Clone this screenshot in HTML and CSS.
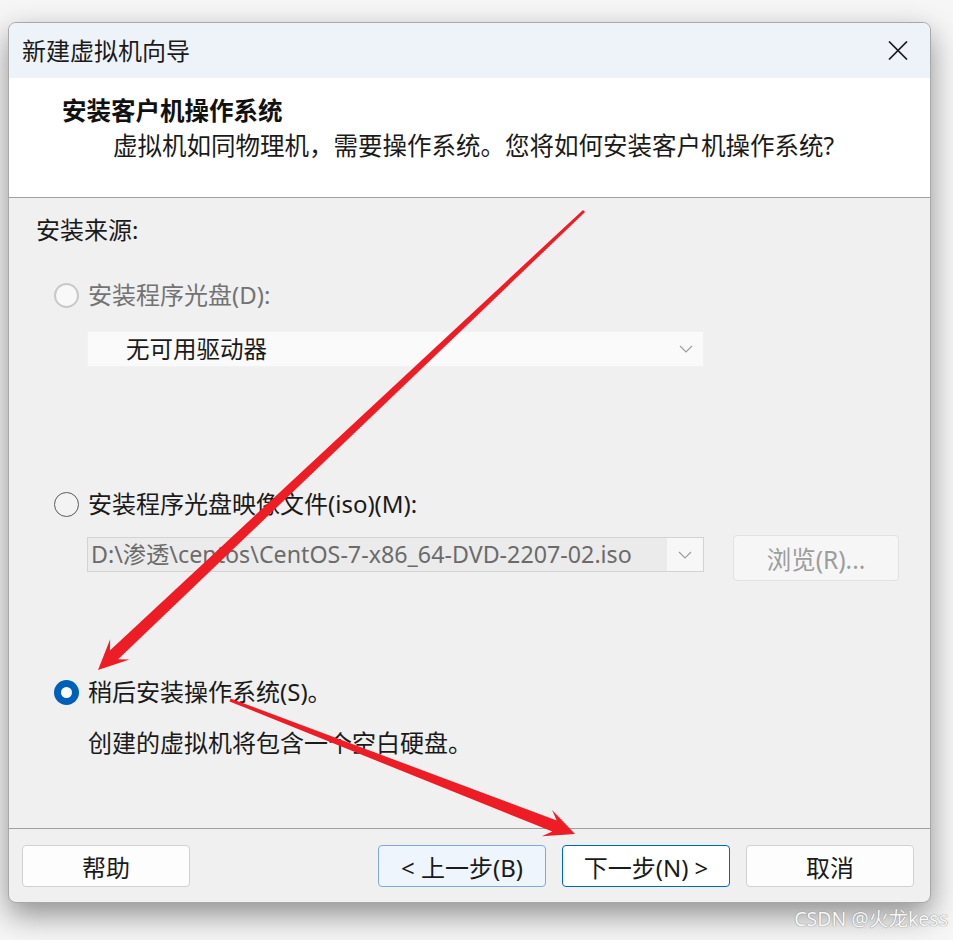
FILE: index.html
```html
<!DOCTYPE html>
<html lang="zh-CN">
<head>
<meta charset="utf-8">
<title>新建虚拟机向导</title>
<link rel="stylesheet" href="styles.css">
</head>
<body>
<div class="window">
  <div class="titlebar">
    <span class="title">新建虚拟机向导</span>
    <svg class="close" width="20" height="19" viewBox="0 0 20 19"><path d="M1 0.5 L19 18.5 M19 0.5 L1 18.5" stroke="#1b1b1b" stroke-width="1.7" fill="none"/></svg>
  </div>
  <div class="header">
    <div class="h-title">安装客户机操作系统</div>
    <div class="h-sub">虚拟机如同物理机，需要操作系统。您将如何安装客户机操作系统?</div>
  </div>
  <div class="content">
    <div class="section-label">安装来源:</div>
    <div class="radio-row disabled r1"><span class="radio"></span><span class="label">安装程序光盘(D):</span></div>
    <div class="select">
      <span class="select-text">无可用驱动器</span>
      <svg class="chev" width="14" height="8" viewBox="0 0 14 8"><path d="M1 1 L7 7 L13 1" stroke="#9c9c9c" stroke-width="1.1" fill="none"/></svg>
    </div>
    <div class="radio-row r2"><span class="radio"></span><span class="label">安装程序光盘映像文件(iso)(M):</span></div>
    <div class="iso-row">
      <div class="combo">
        <span class="combo-text">D:\渗透\centos\CentOS-7-x86_64-DVD-2207-02.iso</span>
        <span class="combo-btn"><svg class="chev" width="14" height="8" viewBox="0 0 14 8"><path d="M1 1 L7 7 L13 1" stroke="#9c9c9c" stroke-width="1.1" fill="none"/></svg></span>
      </div>
      <div class="browse">浏览(R)...</div>
    </div>
    <div class="radio-row r3"><span class="radio checked"></span><span class="label">稍后安装操作系统(S)。</span></div>
    <div class="desc">创建的虚拟机将包含一个空白硬盘。</div>
  </div>
  <div class="footer">
    <button class="btn">帮助</button>
    <div class="spacer"></div>
    <button class="btn back">&lt; 上一步(B)</button>
    <button class="btn next">下一步(N) &gt;</button>
    <button class="btn">取消</button>
  </div>
</div>
<svg class="arrows" width="953" height="940" viewBox="0 0 953 940">
  <polygon fill="#ee1c25" points="98,670 129.4,659.6 118.1,659.3 585,212.1 583,209.9 109.9,650.5 110.2,639.2"/>
  <polygon fill="#ee1c25" points="575,834 541.9,836.2 552.3,831.6 229.5,701.4 230.5,698.6 556.7,820.4 552.1,810.1"/>
</svg>
<div class="watermark">CSDN @火龙kess</div>
</body>
</html>
```
FILE: styles.css
```css
html, body {
  margin: 0;
}
body {
  width: 953px;
  height: 940px;
  overflow: hidden;
  box-sizing: border-box;
  padding: 22px 0 0 8px;
  background: #f6f6f6;
  font-family: "Noto Sans", "Noto Sans CJK SC", sans-serif;
  color: #1a1a1a;
  position: relative;
}
.window {
  width: 923px;
  height: 881px;
  box-sizing: border-box;
  border: 1px solid #a8a8a8;
  border-radius: 8px;
  overflow: hidden;
  background: #f0f0f0;
  box-shadow: 0 12px 30px rgba(0, 0, 0, 0.42);
  display: flex;
  flex-direction: column;
}
.titlebar {
  flex: none;
  height: 55px;
  background: #eef3f9;
  display: flex;
  align-items: center;
  justify-content: space-between;
  padding: 0 22px 0 13px;
}
.title {
  font-size: 24px;
  line-height: 30px;
}
.close {
  display: block;
}
.header {
  flex: none;
  height: 120px;
  box-sizing: border-box;
  background: #fff;
  border-bottom: 1px solid #a0a0a0;
  padding: 18px 0 0 53px;
}
.h-title {
  font-size: 24.5px;
  font-weight: bold;
  line-height: 30px;
  color: #111;
}
.h-sub {
  margin-top: 5px;
  padding-left: 51px;
  font-size: 24.5px;
  line-height: 30px;
}
.content {
  flex: none;
  height: 630px;
  box-sizing: border-box;
  padding: 16px 0 0 27px;
  font-size: 24px;
}
.section-label {
  line-height: 32px;
}
.radio-row {
  display: flex;
  align-items: center;
  height: 32px;
  margin-left: 18px;
  gap: 9px;
  line-height: 32px;
}
.r1 { margin-top: 33px; }
.r2 { margin-top: 121px; }
.r3 { margin-top: 95px; }
.radio {
  flex: none;
  width: 25px;
  height: 25px;
  box-sizing: border-box;
  border-radius: 50%;
  border: 1.7px solid #5a5a5a;
  background: #f3f3f3;
  position: relative;
}
.disabled .radio {
  border: 2px solid #c9c9c9;
  background: #f8f8f8;
}
.disabled .label {
  color: #737373;
}
.radio.checked {
  border: none;
  background: #005fb8;
}
.radio.checked::after {
  content: "";
  position: absolute;
  left: 7px;
  top: 7px;
  width: 11px;
  height: 11px;
  border-radius: 50%;
  background: #fff;
}
.select {
  margin: 20px 0 0 51px;
  width: 617px;
  height: 36px;
  box-sizing: border-box;
  background: #fafafa;
  border: 1px solid #f2f2f2;
  display: flex;
  align-items: center;
  justify-content: space-between;
  padding: 0 10px 0 38px;
}
.select-text {
  font-size: 23.5px;
  line-height: 30px;
}
.chev {
  display: block;
}
.iso-row {
  margin: 15px 0 0 51px;
  display: flex;
  align-items: flex-start;
}
.combo {
  margin-top: 2px;
  width: 617px;
  height: 35px;
  box-sizing: border-box;
  border: 1px solid #d3d3d3;
  background: #f7f7f7;
  display: flex;
  align-items: stretch;
}
.combo-text {
  flex: 1;
  background: #ebebeb;
  color: #6b6b6b;
  font-size: 23.25px;
  line-height: 33px;
  padding-left: 3px;
  white-space: nowrap;
  overflow: hidden;
}
.combo-btn {
  width: 36px;
  display: flex;
  align-items: center;
  justify-content: center;
}
.browse {
  margin-left: 29px;
  width: 166px;
  height: 46px;
  box-sizing: border-box;
  border: 1px solid #e2e2e2;
  border-radius: 4px;
  background: #f6f6f6;
  color: #9d9d9d;
  font-size: 24.5px;
  display: flex;
  align-items: center;
  justify-content: center;
}
.desc {
  margin: 19px 0 0 52px;
  line-height: 32px;
}
.footer {
  flex: 1;
  box-sizing: border-box;
  border-top: 1px solid #a0a0a0;
  padding: 16px 16px 0 13px;
  display: flex;
  align-items: flex-start;
  gap: 16px;
}
.spacer {
  flex: 1;
}
.btn {
  width: 168px;
  height: 42px;
  box-sizing: border-box;
  border: 1px solid #d1d1d1;
  border-radius: 4px;
  background: #fdfdfd;
  font-family: inherit;
  font-size: 24px;
  color: #1a1a1a;
  padding: 0;
  margin: 0;
}
.btn.back {
  background: #eef5fd;
  border-color: #7eaadb;
}
.btn.next {
  background: #fff;
  border-color: #0067c0;
}
.arrows {
  position: absolute;
  left: 0;
  top: 0;
  pointer-events: none;
}
.watermark {
  position: absolute;
  right: 5px;
  top: 906px;
  font-size: 19.5px;
  line-height: 26px;
  color: #f8f8f8;
  text-shadow: 0 0 1px #8a8a8a, 0 0 1px #8a8a8a;
}
```
